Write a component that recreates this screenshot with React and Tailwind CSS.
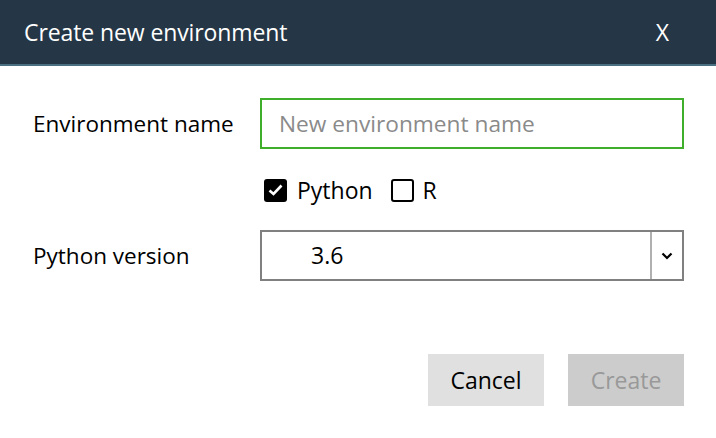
import React from "react";

export default function App() {
  const font = { fontFamily: '"Open Sans", "Noto Sans", sans-serif' };
  return (
    <div className="w-[716px] h-[438px] bg-white flex flex-col" style={font}>
      <div className="h-[66px] bg-[#253646] border-b-2 border-[#4a6f80] flex items-center justify-between pl-6 pr-[47px]">
        <span className="text-white text-[23px] tracking-[-0.1px]">Create new environment</span>
        <span className="text-white text-[23px]">X</span>
      </div>
      <div className="flex flex-col pl-[33px] pr-[32px] pt-[32px]">
        <div className="flex items-center">
          <label className="w-[227px] text-[22.5px] text-black">Environment name</label>
          <input
            className="flex-1 h-[51px] border-2 border-[#3fae2a] pl-[17px] text-[22.7px] outline-none placeholder:text-[#8a8a8a]"
            placeholder="New environment name"
            style={font}
          />
        </div>
        <div className="flex items-center mt-[29px] ml-[231px] h-[24px]">
          <div className="w-[23px] h-[23px] rounded-[3px] bg-black flex items-center justify-center">
            <svg width="15" height="12" viewBox="0 0 15 12">
              <path d="M1.5 6.5 L5.5 10 L13.5 1.5" stroke="white" strokeWidth="2.6" fill="none" />
            </svg>
          </div>
          <span className="ml-[10px] text-[23px] text-black">Python</span>
          <div className="ml-[18px] w-[23px] h-[23px] rounded-[3px] border-2 border-black" />
          <span className="ml-[9px] text-[23px] text-black">R</span>
        </div>
        <div className="flex items-center mt-[28px]">
          <label className="w-[227px] text-[22.5px] text-black">Python version</label>
          <div className="flex-1 h-[51px] border-2 border-[#808080] flex">
            <div className="flex-1 flex items-center pl-[49px] text-[23px] text-black">3.6</div>
            <div className="w-[32px] border-l-2 border-[#b0b0b0] flex items-center justify-center">
              <svg width="12" height="8" viewBox="0 0 12 8">
                <path d="M1.5 1.5 L6 6 L10.5 1.5" stroke="black" strokeWidth="2.2" fill="none" />
              </svg>
            </div>
          </div>
        </div>
        <div className="flex justify-end gap-6 mt-[73px]">
          <button className="w-[116px] h-[52px] bg-[#e0e0e0] text-[23px] text-black" style={font}>Cancel</button>
          <button className="w-[116px] h-[52px] bg-[#cccccc] text-[23px] text-[#999999]" style={font}>Create</button>
        </div>
      </div>
    </div>
  );
}
